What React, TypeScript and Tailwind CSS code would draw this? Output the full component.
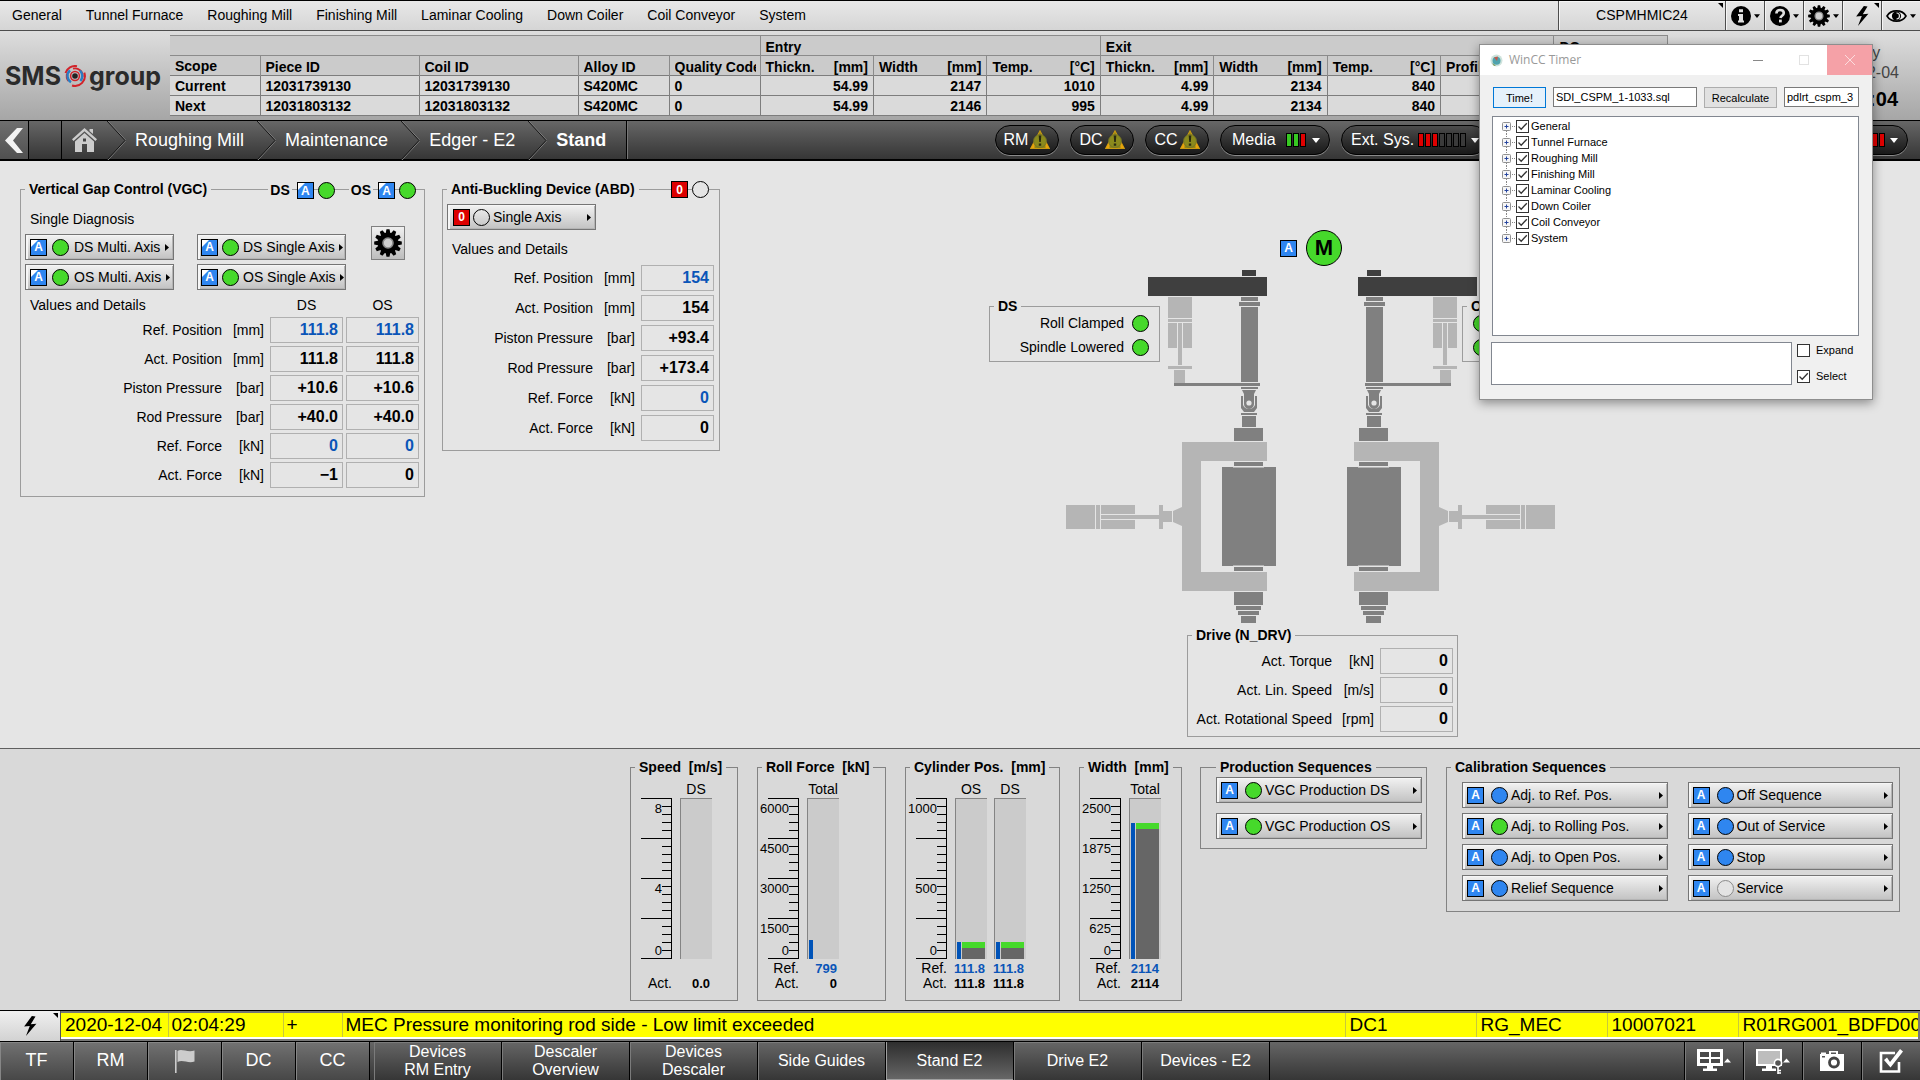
import type { ReactNode } from "react";

type Status = "green" | "blue" | "empty" | "grey";

const DOT: Record<Status, string> = {
  green: "border-black bg-[#46d92b]",
  blue: "border-black bg-[#2f86f0]",
  empty: "border-black bg-transparent",
  grey: "border-[#8a8a8a] bg-[#e3e3e3]",
};

function Dot({ status }: { status: Status }) {
  return <span className={`block size-[17px] shrink-0 rounded-full border ${DOT[status]}`} />;
}

function Badge({ kind = "A" }: { kind?: "A" | "fold" | "0" }) {
  return (
    <span
      className={`relative flex size-[17px] shrink-0 items-center justify-center overflow-hidden border border-black text-[12px] leading-none font-bold text-white ${
        kind === "0" ? "bg-[#dd0000]" : "bg-[#2f86f0]"
      }`}
    >
      {kind === "fold" && (
        <svg className="absolute top-0 left-0 size-[7px]" viewBox="0 0 8 8" aria-hidden="true">
          <path d="M0 0H8L0 8Z" fill="#fff" />
        </svg>
      )}
      <span className="relative">{kind === "0" ? "0" : "A"}</span>
    </span>
  );
}

function Arrow() {
  return (
    <svg className="ml-auto h-[7px] w-1 shrink-0" viewBox="0 0 4 7" aria-hidden="true">
      <path d="M0 0L4 3.500L0 7Z" fill="#000" />
    </svg>
  );
}

function DeviceButton({
  label,
  status,
  kind = "A",
  className,
  labelClass = "",
}: {
  label: string;
  status: Status;
  kind?: "A" | "fold" | "0";
  className: string;
  labelClass?: string;
}) {
  return (
    <button
      type="button"
      className={`flex h-[26px] items-center border border-[#757575] bg-gradient-to-b from-[#f2f2f2] to-[#c2c2c2] pr-1 text-[14px] whitespace-nowrap shadow-[inset_2px_1px_0_#f6f6f6,inset_-1px_-1px_0_#b4b4b4] ${className}`}
    >
      <Badge kind={kind} />
      <Dot status={status} />
      <span className={labelClass}>{label}</span>
      <Arrow />
    </button>
  );
}

function Panel({
  title,
  className,
  legend = "ml-1",
  children,
}: {
  title: string;
  className: string;
  legend?: string;
  children: ReactNode;
}) {
  return (
    <fieldset className={`relative min-w-0 shrink-0 border ${className}`}>
      <legend className={`px-1 text-[14px] leading-5 font-bold whitespace-pre ${legend}`}>{title}</legend>
      {children}
    </fieldset>
  );
}

type ValueRow = { label: string; unit: string; values: string[]; reference?: boolean };

function ValueTable({
  rows,
  heads,
  className,
}: {
  rows: ValueRow[];
  heads?: string[];
  className: string;
}) {
  return (
    <table className={`table-fixed border-separate text-[14px] ${className}`}>
      <colgroup>
        <col />
        <col className="w-[42px]" />
        {rows[0].values.map((_, i) => (
          <col key={i} className="w-[73px]" />
        ))}
      </colgroup>
      {heads && (
        <thead>
          <tr className="h-[18px] leading-[18px]">
            <th className="pl-[6px] text-left font-normal" colSpan={2}>
              Values and Details
            </th>
            {heads.map((h) => (
              <th key={h} className="font-normal">
                {h}
              </th>
            ))}
          </tr>
        </thead>
      )}
      <tbody>
        {rows.map((r) => (
          <tr key={r.label} className="h-[26px] leading-5">
            <th scope="row" className="text-right font-normal whitespace-nowrap">
              {r.label}
            </th>
            <td className="pr-[3px] text-right">{r.unit}</td>
            {r.values.map((v, i) => (
              <td
                key={i}
                className={`border border-[#b0b0b0] pr-1 text-right text-[16px] font-bold ${
                  r.reference ? "text-[#0a55b8]" : "text-black"
                }`}
              >
                {v}
              </td>
            ))}
          </tr>
        ))}
      </tbody>
    </table>
  );
}

const GEAR_ANGLES = [0, 30, 60, 90, 120, 150, 180, 210, 240, 270, 300, 330];

function Gear({ className }: { className: string }) {
  return (
    <svg className={className} viewBox="-14 -14 28 28" aria-hidden="true">
      {GEAR_ANGLES.map((a) => (
        <path key={a} d="M-1.500 -13.800H1.500L2.500 -9H-2.500Z" transform={`rotate(${a})`} fill="#000" />
      ))}
      <circle r="10.400" fill="#000" />
      <circle r="5" fill="#cfcfcf" stroke="#8a8a8a" strokeWidth="1.600" />
    </svg>
  );
}

function Bolt({ className }: { className: string }) {
  return (
    <svg className={className} viewBox="0 0 16 22" aria-hidden="true">
      <path d="M9.5 0L1 11.5L7.2 11L3 22L14.5 8.5L8.3 9L13.5 0.5Z" fill="#000" />
    </svg>
  );
}

function Corner() {
  return (
    <svg className="absolute top-[2px] right-[2px] size-[5px]" viewBox="0 0 5 5" aria-hidden="true">
      <path d="M0 0H5V5Z" fill="#000" />
    </svg>
  );
}

function Caret({ className }: { className: string }) {
  return (
    <svg className={className} viewBox="0 0 8 5" aria-hidden="true">
      <path d="M0 0H8L4 5Z" fill="currentColor" />
    </svg>
  );
}

const MENU = [
  "General",
  "Tunnel Furnace",
  "Roughing Mill",
  "Finishing Mill",
  "Laminar Cooling",
  "Down Coiler",
  "Coil Conveyor",
  "System",
];

const TOP_BTN =
  "relative flex items-center justify-center gap-[3px] border-l border-[#4d4d4d] shadow-[inset_1px_1px_0_#f5f5f5]";

function TopBar() {
  return (
    <header className="flex h-[31px] border-t border-b border-t-black border-b-[#4d4d4d] bg-gradient-to-b from-[#e8e8e8] to-[#d5d5d5] text-[14px]">
      <nav className="flex flex-1 items-center gap-6 pb-px pl-3">
        {MENU.map((m) => (
          <a key={m} href="#" className="whitespace-nowrap">
            {m}
          </a>
        ))}
      </nav>
      <button type="button" className={`${TOP_BTN} w-[167px]`}>
        CSPMHMIC24
        <Corner />
      </button>
      <button type="button" aria-label="Information" className={`${TOP_BTN} w-[39px]`}>
        <svg className="size-5" viewBox="0 0 20 20" aria-hidden="true">
          <circle cx="10" cy="10" r="10" />
          <path d="M8 3.2H12V6.2H8ZM7 8H12V14.6H13V16.6H7V14.6H8V10H7Z" fill="#e0e0e0" />
        </svg>
        <Caret className="h-1 w-[6px]" />
      </button>
      <button type="button" aria-label="Help" className={`${TOP_BTN} w-[39px]`}>
        <svg className="size-5" viewBox="0 0 20 20" aria-hidden="true">
          <circle cx="10" cy="10" r="10" />
          <path d="M6.4 7.6C6.4 5 8 4 10.1 4C12.3 4 13.8 5.2 13.8 7.1C13.8 9.6 10.8 9.7 10.4 12" fill="none" stroke="#e0e0e0" strokeWidth="2.6" />
          <path d="M9 13.6H11.8V16.4H9Z" fill="#e0e0e0" />
        </svg>
        <Caret className="h-1 w-[6px]" />
      </button>
      <button type="button" aria-label="Settings" className={`${TOP_BTN} w-[39px]`}>
        <Gear className="size-[22px]" />
        <Caret className="h-1 w-[6px]" />
      </button>
      <button type="button" aria-label="Alarms" className={`${TOP_BTN} w-[39px]`}>
        <Bolt className="h-5 w-[15px]" />
        <Corner />
      </button>
      <button type="button" aria-label="View" className={`${TOP_BTN} w-[39px]`}>
        <svg className="h-[14px] w-[21px]" viewBox="0 0 21 14" aria-hidden="true">
          <path d="M1 7C5 .2 16 .2 20 7C16 13.8 5 13.8 1 7Z" fill="#eee" stroke="#000" strokeWidth="1.6" />
          <circle cx="10.5" cy="7" r="4.6" />
          <path d="M10.5 4A3 3 0 0 1 10.5 10" fill="none" stroke="#ddd" strokeWidth="1.2" />
        </svg>
        <Caret className="h-1 w-[6px]" />
      </button>
    </header>
  );
}

const QUANTITIES: [string, string][] = [
  ["Thickn.", "[mm]"],
  ["Width", "[mm]"],
  ["Temp.", "[°C]"],
  ["Thickn.", "[mm]"],
  ["Width", "[mm]"],
  ["Temp.", "[°C]"],
  ["Profile", ""],
  ["", ""],
];

const PIECES = [
  ["Current", "12031739130", "12031739130", "S420MC", "0", "54.99", "2147", "1010", "4.99", "2134", "840", "", ""],
  ["Next", "12031803132", "12031803132", "S420MC", "0", "54.99", "2146", "995", "4.99", "2134", "840", "", ""],
];

function PieceHeader() {
  return (
    <section className="flex h-[89px] bg-gradient-to-b from-[#dedede] to-[#a6a6a6]">
      <div className="flex w-[170px] shrink-0 items-center pl-[5px] text-[#2b2b2b]">
        <span className="font-[Inter] text-[25px] leading-7 font-bold">SMS</span>
        <svg className="mx-[3px] size-[22px] shrink-0" viewBox="-11 -11 22 22" aria-hidden="true">
          <g fill="none">
            <path d="M-9.5 -3A10 10 0 0 1 2 -9.8M9.3 -3.4A10 10 0 0 1 -3 9.5" stroke="#d2232a" strokeWidth="2" />
            <path d="M-6.6 5A8.3 8.3 0 0 1 -8 -2.4M-2 -7.3A7.6 7.6 0 0 1 7.6 1" stroke="#d2232a" strokeWidth="1.8" />
            <path d="M-5 -5.6A7.5 7.5 0 0 0 -4 6.3M5 -5.3A7.4 7.4 0 0 1 5.4 5" stroke="#2a7ec4" strokeWidth="2.4" />
            <circle r="4.400" stroke="#d2232a" strokeWidth="1.500" />
          </g>
          <circle r="2.800" fill="#222" />
        </svg>
        <span className="font-[Inter] text-[25px] leading-7 font-bold">group</span>
      </div>
      <table className="mt-1 h-20 w-[1498px] shrink-0 table-fixed border-collapse bg-[#dadada] text-[14px] leading-4 font-bold whitespace-nowrap">
        <colgroup>
          <col className="w-[90px]" />
          <col className="w-[159px]" />
          <col className="w-[159px]" />
          <col className="w-[91px]" />
          <col className="w-[91px]" />
          {QUANTITIES.map((_, i) => (
            <col key={i} />
          ))}
        </colgroup>
        <thead className="bg-[#cbcbcb] text-left">
          <tr className="h-5 border-t border-b border-[#8b8b8b]">
            <td colSpan={5} />
            <th colSpan={3} className="border-l border-[#8b8b8b] px-[5px] pt-[3px]">
              Entry
            </th>
            <th colSpan={4} className="border-l border-[#8b8b8b] px-[5px] pt-[3px]">
              Exit
            </th>
            <th className="border-x border-[#8b8b8b] px-[5px] pt-[3px]">DC</th>
          </tr>
          <tr className="h-5 border-b border-[#7d7d7d]">
            {["Scope", "Piece ID", "Coil ID", "Alloy ID", "Quality Code"].map((h) => (
              <th key={h} className={`border-r border-[#8b8b8b] pl-[5px] ${h === "Scope" ? "" : "pt-[3px]"}`}>
                <span className="mr-1 block overflow-hidden">{h}</span>
              </th>
            ))}
            {QUANTITIES.map(([name, unit], i) => (
              <th key={i} className="border-r border-[#8b8b8b] px-[5px] pt-[3px]">
                <span className="flex justify-between">
                  <span>{name}</span>
                  <span>{unit}</span>
                </span>
              </th>
            ))}
          </tr>
        </thead>
        <tbody>
          {PIECES.map((row) => (
            <tr key={row[0]} className="h-5 border-b border-[#7d7d7d]">
              {row.map((c, i) => (
                <td key={i} className={`border-r border-[#7d7d7d] px-[5px] ${i > 4 ? "text-right" : ""}`}>
                  {c}
                </td>
              ))}
            </tr>
          ))}
        </tbody>
      </table>
      <div className="ml-auto flex w-[124px] shrink-0 flex-col items-center pt-3 text-[16px] leading-5 text-[#444]">
        <span>Friday</span>
        <span>2020-12-04</span>
        <time className="mt-1 text-[20px] leading-6 font-bold text-black">02:05:04</time>
      </div>
    </section>
  );
}

function Chevron() {
  return (
    <svg className="h-[39px] w-[19px] shrink-0" viewBox="0 0 19 39" aria-hidden="true">
      <path d="M1 0L19 19.5L1 39" fill="none" stroke="#808080" strokeWidth="1" />
      <path d="M0 0L18 19.5L0 39" fill="none" stroke="#151515" strokeWidth="1" />
    </svg>
  );
}

function Warning() {
  return (
    <svg className="size-5" viewBox="0 0 20 20" aria-hidden="true">
      <path d="M10 1L19.3 18.5H.7Z" fill="#8f8516" stroke="#c99a10" strokeWidth="1.2" />
      <path d="M1 18L4.5 11.5V18ZM19 18L15.5 11.5V18Z" fill="#e8a30c" />
      <circle cx="10" cy="11" r="6.4" fill="#8b8a1d" stroke="#6f6f2a" strokeWidth=".8" />
      <path d="M8.7 5.5H11.3L10.8 12H9.2ZM8.8 13.4H11.2V15.8H8.8Z" fill="#2a2a12" />
    </svg>
  );
}

const LEVEL: Record<string, string> = { g: "bg-[#37c922]", r: "bg-[#e00000]", o: "bg-[#3a3a3a]" };

function Levels({ value }: { value: string }) {
  return (
    <span className="flex gap-px">
      {value.split("").map((c, i) => (
        <span key={i} className={`h-[14px] w-[6px] border border-black ${LEVEL[c]}`} />
      ))}
    </span>
  );
}

const PILL =
  "flex h-[30px] shrink-0 items-center rounded-full border border-black bg-gradient-to-b from-[#4c4c4c] to-[#191919] shadow-[0_1px_0_#8a8a8a]";

function Breadcrumb() {
  return (
    <nav className="flex h-[41px] items-center border-t border-b-2 border-black bg-gradient-to-b from-[#676767] to-[#363636] text-[18px] text-white">
      <button type="button" aria-label="Back" className="flex h-full w-[29px] items-center justify-center border-r border-black bg-gradient-to-b from-[#6f6f6f] to-[#505050]">
        <svg className="h-[25px] w-[18px]" viewBox="0 0 18 25" aria-hidden="true">
          <path d="M12 0H18L8 12.5L18 25H12L0 12.5Z" fill="#f2f2f2" />
        </svg>
      </button>
      <span className="h-full w-[33px] border-r border-black" />
      <a href="#" aria-label="Home" className="mr-[10px] ml-[10px]">
        <svg className="h-6 w-[25px]" viewBox="0 0 25 24" aria-hidden="true">
          <path d="M12.5 0L25 11.2L23.4 13L12.5 3.2L1.600 13L0 11.2Z" fill="#ccc" />
          <path d="M17.500 1H21V6L17.500 3Z" fill="#ccc" />
          <path d="M12.500 5L22 13.400V24H15V16H10V24H3V13.400Z" fill="#ccc" />
          <path d="M11 10.500H14V13.500H11Z" fill="#444" />
        </svg>
      </a>
      <Chevron />
      {["Roughing Mill", "Maintenance", "Edger - E2"].map((b) => (
        <span key={b} className="flex h-full items-center whitespace-nowrap">
          <a href="#" className="mr-[13px] ml-[9px]">
            {b}
          </a>
          <Chevron />
        </span>
      ))}
      <a href="#" className="ml-[9px] font-bold">
        Stand
      </a>
      <span className="ml-5 h-full border-r border-black shadow-[1px_0_0_#777]" />
      <div className="ml-auto flex items-center gap-[11px] pr-3 text-[16px]">
        {["RM", "DC", "CC"].map((n) => (
          <button key={n} type="button" className={`${PILL} w-16 justify-center gap-[2px]`}>
            {n}
            <Warning />
          </button>
        ))}
        <button type="button" className={`${PILL} w-[110px] gap-[10px] pl-[11px]`}>
          Media
          <Levels value="ggr" />
          <Caret className="-ml-1 h-[5px] w-2" />
        </button>
        <button type="button" className={`${PILL} w-[146px] gap-1 pl-[9px]`}>
          Ext. Sys.
          <Levels value="rrroooo" />
          <Caret className="ml-px h-[5px] w-2" />
        </button>
        <button type="button" aria-label="Network status" className={`${PILL} w-[190px]`} />
        <button type="button" aria-label="Process status" className={`${PILL} w-[209px] justify-end gap-[5px] pr-[9px]`}>
          <Levels value="rrrrr" />
          <Caret className="h-[5px] w-2" />
        </button>
      </div>
    </nav>
  );
}

const VGC_ROWS: ValueRow[] = [
  { label: "Ref. Position", unit: "[mm]", values: ["111.8", "111.8"], reference: true },
  { label: "Act. Position", unit: "[mm]", values: ["111.8", "111.8"] },
  { label: "Piston Pressure", unit: "[bar]", values: ["+10.6", "+10.6"] },
  { label: "Rod Pressure", unit: "[bar]", values: ["+40.0", "+40.0"] },
  { label: "Ref. Force", unit: "[kN]", values: ["0", "0"], reference: true },
  { label: "Act. Force", unit: "[kN]", values: ["−1", "0"] },
];

const ABD_ROWS: ValueRow[] = [
  { label: "Ref. Position", unit: "[mm]", values: ["154"], reference: true },
  { label: "Act. Position", unit: "[mm]", values: ["154"] },
  { label: "Piston Pressure", unit: "[bar]", values: ["+93.4"] },
  { label: "Rod Pressure", unit: "[bar]", values: ["+173.4"] },
  { label: "Ref. Force", unit: "[kN]", values: ["0"], reference: true },
  { label: "Act. Force", unit: "[kN]", values: ["0"] },
];

const DRIVE_ROWS: ValueRow[] = [
  { label: "Act. Torque", unit: "[kN]", values: ["0"] },
  { label: "Act. Lin. Speed", unit: "[m/s]", values: ["0"] },
  { label: "Act. Rotational Speed", unit: "[rpm]", values: ["0"] },
];

function VgcPanel() {
  return (
    <Panel title="Vertical Gap Control (VGC)" className="ml-5 w-[405px] border-[#9c9c9c] pb-[5px]">
      <div className="absolute -top-[19px] right-[8px] flex items-center text-[14px] font-bold">
        <span className="bg-[#e5e5e5] px-[2px]">DS</span>
        <span className="ml-[5px] flex gap-1">
          <Badge kind="fold" />
          <Dot status="green" />
        </span>
        <span className="ml-[14px] bg-[#e5e5e5] px-[2px]">OS</span>
        <span className="ml-[5px] flex gap-1">
          <Badge kind="fold" />
          <Dot status="green" />
        </span>
      </div>
      <div className="flex">
        <div className="pt-[10px] pl-1">
          <p className="pl-[5px] text-[14px] leading-5">Single Diagnosis</p>
          <div className="mt-[5px] grid grid-cols-2 gap-x-[23px] gap-y-1">
            <DeviceButton kind="fold" label="DS Multi. Axis" status="green" className="w-[149px] gap-[5px] pl-1" />
            <DeviceButton kind="fold" label="DS Single Axis" status="green" className="w-[149px] gap-1 pl-[3px]" />
            <DeviceButton kind="fold" label="OS Multi. Axis" status="green" className="w-[149px] gap-[5px] pl-1" />
            <DeviceButton kind="fold" label="OS Single Axis" status="green" className="w-[149px] gap-1 pl-[3px]" />
          </div>
        </div>
        <button
          type="button"
          aria-label="VGC settings"
          className="mt-[27px] ml-[25px] flex size-[34px] items-center justify-center border border-[#808080] bg-gradient-to-b from-[#f0f0f0] to-[#bdbdbd]"
        >
          <Gear className="size-[28px]" />
        </button>
      </div>
      <ValueTable rows={VGC_ROWS} heads={["DS", "OS"]} className="mt-[3px] w-[401px] border-spacing-[3px]" />
    </Panel>
  );
}

function AbdPanel() {
  return (
    <Panel title="Anti-Buckling Device (ABD)" className="ml-[17px] w-[278px] border-[#9c9c9c] pb-[5px]">
      <div className="absolute -top-[18px] right-[10px] flex gap-1">
        <Badge kind="0" />
        <span className="rounded-full bg-[#e5e5e5]">
          <Dot status="empty" />
        </span>
      </div>
      <DeviceButton kind="0" label="Single Axis" status="empty" className="mt-[5px] ml-1 w-[149px] gap-[3px] pl-[5px]" />
      <p className="mt-[9px] pl-[9px] text-[14px] leading-5">Values and Details</p>
      <ValueTable rows={ABD_ROWS} className="mt-[2px] w-[274px] border-spacing-x-[3px] border-spacing-y-1" />
    </Panel>
  );
}

function Spindle() {
  return (
    <g fill="#808080">
      <path d="M1242 270H1256V276H1242Z" fill="#3f3f3f" />
      <path d="M1241 297H1258V301H1241ZM1239 302H1260V306H1239ZM1241 307H1258V382H1241ZM1241 387H1258V389H1241Z" />
      <path d="M1242 390H1256L1254 394V404A5 5 0 0 1 1244 404V394ZM1241 396H1243V405A6.500 6.500 0 0 0 1255 405V396H1257V408L1254 412H1244L1241 408Z" />
      <circle cx="1249" cy="403" r="2.600" fill="#e5e5e5" />
      <path d="M1241 413H1257V415H1241ZM1242 416H1256V427H1242ZM1234 428H1263V441H1234Z" />
      <path d="M1234 462H1263V466H1234ZM1222 467H1276V566H1222ZM1234 567H1263V571H1234Z" />
      <path d="M1233 466.500H1264V467.500H1233ZM1233 565.500H1264V566.500H1233Z" fill="#e5e5e5" />
      <path d="M1234 592H1263V605H1234ZM1236 606H1261V610H1236ZM1238 611H1259V615H1238ZM1241 616H1256V623H1241Z" />
    </g>
  );
}

function HoldDown() {
  return (
    <g fill="#b5b5b5">
      <path d="M1148 277H1267V296H1148Z" fill="#3f3f3f" />
      <path d="M1168 297H1192V318H1168ZM1168 319H1192V322H1168ZM1168 323H1177V348H1168ZM1183 323H1192V348H1183ZM1178 323H1182V365H1178ZM1168 366H1192V369H1168Z" />
      <path d="M1174 383H1260V386H1174Z" fill="#808080" />
      <path d="M1174 370H1185V383H1174Z" />
    </g>
  );
}

function Yoke() {
  return (
    <g fill="#b5b5b5">
      <path d="M1182 442H1267V461H1201V572H1267V591H1182V526L1173 522V511L1182 507Z" />
      <path d="M1066 505H1095V529H1066ZM1096 505H1100V529H1096ZM1101 505H1135V514H1101ZM1101 520H1135V529H1101ZM1101 515H1159V519H1101ZM1159 505H1163V529H1159ZM1163 511H1172V522H1163Z" />
    </g>
  );
}

function ClampPanel({ side, mirrored }: { side: string; mirrored?: boolean }) {
  return (
    <Panel title={side} className="w-[171px] border-[#9c9c9c] pb-[5px]">
      <ul className="-mt-px flex flex-col gap-[7px] px-[10px] text-[14px]">
        {["Roll Clamped", "Spindle Lowered"].map((t) => (
          <li key={t} className={`flex items-center justify-end gap-2 leading-[17px] ${mirrored ? "flex-row-reverse" : ""}`}>
            {t}
            <Dot status="green" />
          </li>
        ))}
      </ul>
    </Panel>
  );
}

function Mimic() {
  return (
    <div className="relative mt-[51px] ml-[269px] w-[644px] shrink-0">
      <div className="flex items-center justify-center gap-[9px]">
        <Badge />
        <span className="flex size-9 items-center justify-center rounded-full border border-black bg-[#46d92b] text-[22px] leading-none font-bold">
          M
        </span>
      </div>
      <svg className="mt-1 block h-[355px] w-full" viewBox="989 270 644 355" role="img" aria-label="Edger stand">
        <HoldDown />
        <g transform="translate(2625 0) scale(-1 1)">
          <HoldDown />
        </g>
        <Yoke />
        <g transform="translate(2621 0) scale(-1 1)">
          <Yoke />
        </g>
        <Spindle />
        <g transform="translate(125 0)">
          <Spindle />
        </g>
      </svg>
      <div className="absolute top-[66px] left-0">
        <ClampPanel side="DS" />
      </div>
      <div className="absolute top-[66px] right-0">
        <ClampPanel side="OS" mirrored />
      </div>
      <Panel title="Drive (N_DRV)" className="ml-[198px] w-[271px] border-[#9c9c9c] pb-px">
        <ValueTable rows={DRIVE_ROWS} className="w-[268px] border-spacing-[3px]" />
      </Panel>
    </div>
  );
}

type GaugeBar = { head: string; ref?: string; act: string; refPx?: number; actPx?: number };

const TICKS = Array.from({ length: 21 }, (_, i) => i);

function Gauge({
  title,
  labels,
  bars,
  className,
}: {
  title: string;
  labels: [number, string][];
  bars: GaugeBar[];
  className: string;
}) {
  const hasRef = bars.some((b) => b.ref);
  return (
    <Panel title={title} className={`border-[#838383] pb-[9px] ${className}`}>
      <div className="flex pt-[3px] text-[14px]">
        <div className="w-[41px] shrink-0 pt-[18px]">
          <svg className="block h-[161px] w-[41px]" viewBox="0 0 41 161" aria-hidden="true">
            <path d="M40.500 0V161" stroke="#000" />
            {TICKS.map((i) => (
              <path key={i} d={`M${i % 5 === 0 ? 10 : 31} ${i * 8 + 0.5}H41`} stroke="#000" />
            ))}
            {labels.map(([y, t]) => (
              <text key={t} x="31" y={y} textAnchor="end" fontSize="13">
                {t}
              </text>
            ))}
          </svg>
          <div className="mt-[2px] text-right leading-[15px]">
            <div className="h-[15px]">{hasRef ? "Ref." : ""}</div>
            <div>Act.</div>
          </div>
        </div>
        <div className="flex gap-[7px] pl-2">
          {bars.map((b) => (
            <div key={b.head} className="flex w-8 flex-col">
              <div className="self-center leading-[18px]">{b.head}</div>
              <div className="flex h-[161px] items-end gap-px border-t border-l border-[#848484] bg-[#cbcbcb] pl-px">
                <span className="w-1 bg-[#0053b8]" style={{ height: b.refPx ?? 0 }} />
                {b.actPx ? (
                  <span className="w-[23px] border-t-[6px] border-[#46d92b] bg-[#666]" style={{ height: b.actPx }} />
                ) : null}
              </div>
              <div className="mt-[2px] pr-[2px] text-right text-[13px] leading-[15px] font-bold">
                <div className="flex h-[15px] justify-end text-[#0a55b8]">{b.ref ?? ""}</div>
                <div className="flex justify-end">{b.act}</div>
              </div>
            </div>
          ))}
        </div>
      </div>
    </Panel>
  );
}

const CALIBRATION: [string, Status][] = [
  ["Adj. to Ref. Pos.", "blue"],
  ["Off Sequence", "blue"],
  ["Adj. to Rolling Pos.", "green"],
  ["Out of Service", "blue"],
  ["Adj. to Open Pos.", "blue"],
  ["Stop", "blue"],
  ["Relief Sequence", "blue"],
  ["Service", "grey"],
];

function LowerArea() {
  return (
    <section className="flex h-[262px] items-start justify-end border-t border-[#5f5f5f] bg-[#d9d9d9] pt-2 pr-5">
      <Gauge
        title="Speed  [m/s]"
        className="mr-[19px] w-[108px]"
        labels={[[15, "8"], [95, "4"], [157, "0"]]}
        bars={[{ head: "DS", act: "0.0" }]}
      />
      <Gauge
        title="Roll Force  [kN]"
        className="mr-[19px] w-[129px]"
        labels={[[15, "6000"], [55, "4500"], [95, "3000"], [135, "1500"], [157, "0"]]}
        bars={[{ head: "Total", ref: "799", act: "0", refPx: 19 }]}
      />
      <Gauge
        title="Cylinder Pos.  [mm]"
        className="mr-[19px] w-[155px]"
        labels={[[15, "1000"], [95, "500"], [157, "0"]]}
        bars={[
          { head: "OS", ref: "111.8", act: "111.8", refPx: 17, actPx: 17 },
          { head: "DS", ref: "111.8", act: "111.8", refPx: 17, actPx: 17 },
        ]}
      />
      <Gauge
        title="Width  [mm]"
        className="mr-[18px] w-[103px]"
        labels={[[15, "2500"], [55, "1875"], [95, "1250"], [135, "625"], [157, "0"]]}
        bars={[{ head: "Total", ref: "2114", act: "2114", refPx: 136, actPx: 136 }]}
      />
      <Panel title="Production Sequences" legend="ml-[15px]" className="mr-[19px] w-[227px] border-[#838383] pb-[9px]">
        <div className="flex flex-col gap-[10px] pl-[15px]">
          <DeviceButton label="VGC Production DS" status="green" labelClass="-ml-1" className="w-[206px] gap-[7px] pl-1" />
          <DeviceButton label="VGC Production OS" status="green" labelClass="-ml-1" className="w-[206px] gap-[7px] pl-1" />
        </div>
      </Panel>
      <Panel title="Calibration Sequences" className="w-[454px] border-[#838383] pb-[10px]">
        <div className="grid grid-cols-2 gap-x-5 gap-y-[5px] pt-[5px] pr-[6px] pl-[15px]">
          {CALIBRATION.map(([label, status]) => (
            <DeviceButton key={label} label={label} status={status} labelClass="-ml-1" className="gap-[7px] pl-1" />
          ))}
        </div>
      </Panel>
    </section>
  );
}

function AlarmBar() {
  return (
    <section className="flex h-[31px] border-t border-black bg-white">
      <button
        type="button"
        aria-label="Alarm list"
        className="relative flex w-[61px] shrink-0 items-center justify-center border-r border-[#555] bg-gradient-to-b from-[#f0f0f0] to-[#d2d2d2]"
      >
        <Bolt className="h-5 w-[15px]" />
        <Corner />
      </button>
      <div className="min-w-0 flex-1 overflow-hidden border-t-2 border-r-2 border-b-2 border-[#777]">
        <table className="h-6 w-full table-fixed border-collapse bg-[#ffff00] text-[19px] leading-6 whitespace-nowrap">
          <tbody>
            <tr>
              <td className="w-[107px] overflow-hidden border-r border-[#c9c93a] pl-1">2020-12-04</td>
              <td className="w-[115px] border-r border-[#c9c93a] pl-[3px]">02:04:29</td>
              <td className="w-[59px] border-r border-[#c9c93a] pl-[3px]">+</td>
              <td className="border-r border-[#c9c93a] pl-[3px]">MEC Pressure monitoring rod side - Low limit exceeded</td>
              <td className="w-[131px] border-r border-[#c9c93a] pl-1">DC1</td>
              <td className="w-[131px] border-r border-[#c9c93a] pl-1">RG_MEC</td>
              <td className="w-[131px] border-r border-[#c9c93a] pl-1">10007021</td>
              <td className="w-[180px] overflow-hidden pl-1">R01RG001_BDFD001</td>
            </tr>
          </tbody>
        </table>
      </div>
    </section>
  );
}

const AREA_BTN =
  "flex w-[74px] items-center justify-center border-r border-black bg-gradient-to-b from-[#727272] to-[#474747] pb-px text-[18px] shadow-[inset_1px_1px_0_#868686]";
const PAGE_BTN =
  "flex w-32 items-center justify-center border-r border-black px-4 pb-px text-center text-[16px] leading-[18px]";
const TOOL_BTN = "flex w-[59px] items-center justify-center border-l border-black shadow-[inset_1px_0_0_#7b7b7b]";

const PAGES = [
  "Devices\nRM Entry",
  "Descaler\nOverview",
  "Devices\nDescaler",
  "Side Guides",
  "Stand E2",
  "Drive E2",
  "Devices - E2",
];

function Screen({ locked }: { locked?: boolean }) {
  return (
    <svg className="h-[26px] w-[34px]" viewBox="0 0 34 26" aria-hidden="true">
      <path d="M0 1H26V18H0ZM10 18H16V20.500H20V23H6V20.500H10Z" fill="#fff" />
      {locked ? (
        <>
          <path d="M2 3H24V16H2Z" fill="#bdbdbd" />
          <circle cx="22" cy="15" r="3.600" fill="#555" stroke="#fff" strokeWidth="1.600" />
          <path d="M22 18V26M22 22.500H25M22 25H25" stroke="#fff" strokeWidth="1.600" />
        </>
      ) : (
        <path d="M3 4H12V9H3ZM14 4H23V9H14ZM3 11H12V15H3ZM14 11H23V15H14Z" fill="#4a4a4a" />
      )}
      <path d="M27 14.500L30.500 10.500L34 14.500Z" fill="#fff" />
    </svg>
  );
}

function BottomBar() {
  return (
    <nav className="flex h-[39px] border-t border-black bg-gradient-to-b from-[#666] to-[#363636] text-white">
      <button type="button" className={AREA_BTN}>TF</button>
      <button type="button" className={AREA_BTN}>RM</button>
      <button type="button" aria-label="Flag" className={AREA_BTN}>
        <svg className="h-6 w-5" viewBox="0 0 20 24" aria-hidden="true">
          <path d="M0 1H1.600V24H0Z" fill="#ccc" />
          <path d="M2.500 2C7 -1 12 4 19.500 1.500V12.500C13 15 8 10 2.500 13Z" fill="#ccc" />
        </svg>
      </button>
      <button type="button" className={AREA_BTN}>DC</button>
      <button type="button" className={`${AREA_BTN} mr-1`}>CC</button>
      {PAGES.map((p) => (
        <button
          key={p}
          type="button"
          className={`${PAGE_BTN} ${
            p === "Stand E2"
              ? "bg-gradient-to-b from-[#2e2e2e] to-[#686868] shadow-[inset_1px_-1px_0_#a0a0a0]"
              : "shadow-[inset_1px_1px_0_#7b7b7b]"
          }`}
        >
          <span className="whitespace-pre">{p}</span>
        </button>
      ))}
      <div className="ml-auto flex">
        <button type="button" aria-label="Screens" className={TOOL_BTN}>
          <Screen />
        </button>
        <button type="button" aria-label="Lock screen" className={TOOL_BTN}>
          <Screen locked />
        </button>
        <button type="button" aria-label="Screenshot" className={TOOL_BTN}>
          <svg className="h-5 w-6" viewBox="0 0 24 20" aria-hidden="true">
            <path d="M0 3H1V1.500H6V3H9V0H18V3H24V20H0Z" fill="#fff" />
            <path d="M11 1.500H16V3H11Z" fill="#555" />
            <circle cx="14" cy="11.500" r="4.500" fill="none" stroke="#444" strokeWidth="2.800" />
            <path d="M2 5H5V6.500H2Z" fill="#555" />
          </svg>
        </button>
        <button type="button" aria-label="Acknowledge" className={TOOL_BTN}>
          <svg className="h-6 w-6" viewBox="0 0 24 24" aria-hidden="true">
            <path d="M16 4H2V22.500H20V13" fill="none" stroke="#fff" strokeWidth="2.600" />
            <path d="M5 11L8 8.500L11 13L21 0L24 2.500L11.500 18.500Z" fill="#fff" />
          </svg>
        </button>
      </div>
    </nav>
  );
}

function Check({ label, checked, className }: { label: string; checked: boolean; className: string }) {
  return (
    <label className={`flex items-center ${className}`}>
      <span className="relative block size-[13px] shrink-0">
        <input type="checkbox" defaultChecked={checked} className="peer block size-[13px] appearance-none border border-[#333] bg-white" />
        <svg className="pointer-events-none absolute inset-0 hidden size-[13px] peer-checked:block" viewBox="0 0 13 13" aria-hidden="true">
          <path d="M2.500 6.500L5.200 9.200L10.800 3.200" fill="none" stroke="#333" strokeWidth="1.300" />
        </svg>
      </span>
      {label}
    </label>
  );
}

function TimerWindow() {
  return (
    <div
      role="dialog"
      aria-label="WinCC Timer"
      className="absolute top-[44px] right-[47px] w-[394px] border border-[#8e8e8e] bg-[#f0f0f0] pb-[14px] text-[11px] leading-4 shadow-[0_3px_10px_rgba(0,0,0,0.4)]"
    >
      <div className="flex h-[30px] items-center bg-white pl-[10px]">
        <svg className="size-[13px]" viewBox="0 0 13 13" aria-hidden="true">
          <circle cx="6.500" cy="6.500" r="6" fill="#cfe3dc" />
          <circle cx="6.500" cy="6.800" r="4" fill="#4fa3ad" />
          <path d="M4 3.500L7 7L8 2.500Z" fill="#c4574b" />
          <path d="M2 9L6 11.500L4 12Z" fill="#7a9a5a" />
        </svg>
        <span className="ml-[6px] font-['Open_Sans'] text-[12px] text-[#999]">WinCC Timer</span>
        <button type="button" aria-label="Minimize" className="ml-auto flex h-full w-[46px] items-center justify-center">
          <span className="h-px w-[10px] bg-[#888]" />
        </button>
        <button type="button" aria-label="Maximize" className="flex h-full w-[46px] items-center justify-center">
          <span className="size-[10px] border border-[#e2e2e2]" />
        </button>
        <button type="button" aria-label="Close" className="flex h-full w-[45px] items-center justify-center bg-[#f5a1a7]">
          <svg className="size-[10px]" viewBox="0 0 10 10" aria-hidden="true">
            <path d="M0 0L10 10M10 0L0 10" stroke="#fbdcde" />
          </svg>
        </button>
      </div>
      <div className="flex gap-[7px] pt-3 pr-[13px] pl-[13px]">
        <button type="button" className="h-[21px] w-[53px] border border-[#0078d7] bg-[#e5f1fb]">
          Time!
        </button>
        <input
          aria-label="SQL file"
          defaultValue="SDI_CSPM_1-1033.sql"
          className="h-5 w-[144px] border border-[#7a7a7a] bg-white px-[2px]"
        />
        <button type="button" className="h-[21px] w-[73px] border border-[#adadad] bg-[#e1e1e1]">
          Recalculate
        </button>
        <input
          aria-label="Database"
          defaultValue="pdlrt_cspm_3"
          className="h-5 w-[75px] border border-[#7a7a7a] bg-white px-[2px]"
        />
      </div>
      <ul className="mt-2 ml-3 h-[220px] w-[367px] border border-[#828790] bg-white pt-px pl-[9px]">
        {MENU.map((m, i) => (
          <li key={m} className="flex h-4 items-center">
            <svg className="h-4 w-[14px] shrink-0" viewBox="0 0 14 16" aria-hidden="true">
              {i > 0 && <path d="M4.500 0V4" stroke="#888" strokeDasharray="1 1" />}
              <path d="M10 8.500H14" stroke="#888" strokeDasharray="1 1" />
              {i < MENU.length - 1 && <path d="M4.500 13V16" stroke="#888" strokeDasharray="1 1" />}
              <rect x=".5" y="4.500" width="8" height="8" rx="1" fill="#f6f6f6" stroke="#919191" />
              <path d="M2.500 8.500H6.500M4.500 6.500V10.500" stroke="#26459e" />
            </svg>
            <Check label={m} checked className="gap-[2px]" />
          </li>
        ))}
      </ul>
      <div className="mt-[6px] ml-[11px] flex">
        <textarea aria-label="Output" className="h-[43px] w-[301px] resize-none border border-[#828790] bg-white p-1" />
        <div className="ml-[5px] flex flex-col gap-[10px]">
          <Check label="Expand" checked={false} className="gap-[6px]" />
          <Check label="Select" checked className="gap-[6px]" />
        </div>
      </div>
    </div>
  );
}

export default function App() {
  return (
    <div className="relative flex min-h-screen flex-col overflow-hidden bg-[#e5e5e5] font-['Liberation_Sans',Arial,sans-serif] text-black">
      <TopBar />
      <PieceHeader />
      <Breadcrumb />
      <main className="flex flex-1 items-start pt-[18px]">
        <VgcPanel />
        <AbdPanel />
        <Mimic />
      </main>
      <LowerArea />
      <AlarmBar />
      <BottomBar />
      <TimerWindow />
    </div>
  );
}
